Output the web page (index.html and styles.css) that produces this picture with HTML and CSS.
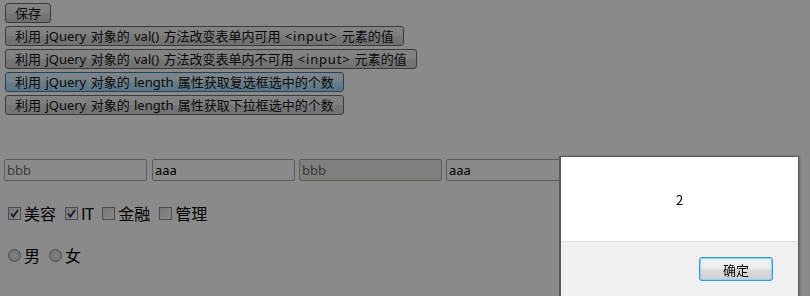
FILE: index.html
```html
<!DOCTYPE html>
<html lang="zh-CN">
<head>
<meta charset="utf-8">
<title>jQuery 表单</title>
<link rel="stylesheet" href="styles.css">
</head>
<body>
<div class="page">
  <div class="btns">
    <button class="btn">保存</button>
    <button class="btn">利用 jQuery 对象的 val() 方法改变表单内可用 <span class="tag">&lt;input&gt;</span> 元素的值</button>
    <button class="btn">利用 jQuery 对象的 val() 方法改变表单内不可用 <span class="tag">&lt;input&gt;</span> 元素的值</button>
    <button class="btn btn-hover">利用 jQuery 对象的 length 属性获取复选框选中的个数</button>
    <button class="btn">利用 jQuery 对象的 length 属性获取下拉框选中的个数</button>
  </div>
  <div class="fields">
    <input class="field field-muted" type="text" value="bbb">
    <input class="field" type="text" value="aaa">
    <input class="field field-disabled" type="text" value="bbb" disabled>
    <input class="field" type="text" value="aaa">
  </div>
  <div class="checks">
    <label class="opt"><span class="box checked"><svg viewBox="0 0 13 13" width="13" height="13"><path d="M3 6.5 L5.3 9.5 L10 3" fill="none" stroke="#1e2a66" stroke-width="1.8"/></svg></span>美容</label>
    <label class="opt"><span class="box checked"><svg viewBox="0 0 13 13" width="13" height="13"><path d="M3 6.5 L5.3 9.5 L10 3" fill="none" stroke="#1e2a66" stroke-width="1.8"/></svg></span>IT</label>
    <label class="opt"><span class="box"></span>金融</label>
    <label class="opt"><span class="box"></span>管理</label>
  </div>
  <div class="radios">
    <label class="opt"><span class="radio"></span>男</label>
    <label class="opt"><span class="radio"></span>女</label>
  </div>
</div>
<div class="overlay"></div>
<div class="dialog">
  <div class="dialog-body">2</div>
  <div class="dialog-foot"><button class="ok">确定</button></div>
</div>
</body>
</html>
```
FILE: styles.css
```css
html, body {
  margin: 0;
  padding: 0;
  background: #ffffff;
  width: 810px;
  height: 296px;
  overflow: hidden;
  font-family: "Noto Sans CJK SC", "Noto Sans", sans-serif;
}

.page {
  padding: 3px 0 0 5px;
}

.btns {
  display: flex;
  flex-direction: column;
  align-items: flex-start;
  gap: 3px;
}

.btn {
  height: 20px;
  padding: 0 9px;
  margin: 0;
  border: 1px solid #707070;
  border-radius: 3px;
  background: linear-gradient(#f2f2f2 0%, #ebebeb 48%, #dddddd 52%, #cfcfcf 100%);
  font-family: "Noto Sans", "Noto Sans CJK SC", sans-serif;
  font-size: 13px;
  line-height: 18px;
  word-spacing: 1px;
  color: #111;
  white-space: nowrap;
}

.tag {
  letter-spacing: 0.8px;
}

.btn-hover {
  border-color: #3c7fb1;
  background: linear-gradient(#eaf6fd 0%, #d9f0fc 48%, #bee6fd 52%, #a7d9f5 100%);
}

.fields {
  display: flex;
  gap: 5px;
  margin: 44px 0 0 -1px;
  white-space: nowrap;
}

.field {
  flex: none;
  box-sizing: border-box;
  width: 143px;
  height: 22px;
  margin: 0;
  padding: 0 2px;
  border: 1px solid #abadb3;
  border-radius: 2px;
  background: #ffffff;
  font-family: "Noto Sans", sans-serif;
  font-size: 13px;
  color: #000;
}

.field + .field + .field {
  margin-left: -1px;
}

.field-muted {
  color: #6d6d6d;
}

.field-disabled {
  background: #ebebe6;
  color: #6d6d6d;
}

.checks {
  display: flex;
  align-items: center;
  margin: 21px 0 0 3px;
  height: 22px;
  font-size: 16px;
  color: #000;
}

.radios {
  display: flex;
  align-items: center;
  margin: 20px 0 0 3px;
  height: 22px;
  font-size: 16px;
  color: #000;
}

.opt {
  display: flex;
  align-items: center;
  margin-right: 10px;
  line-height: 18px;
}

.opt + .opt {
  margin-left: -1px;
}

.checks .opt:nth-child(2) {
  letter-spacing: -1px;
}

.box {
  box-sizing: border-box;
  width: 13px;
  height: 13px;
  margin-right: 3px;
  border: 1px solid #8f8f8f;
  background: linear-gradient(135deg, #dcdcdc, #ffffff);
  display: block;
}

.box svg {
  display: block;
  margin: -1px;
}

.radio {
  box-sizing: border-box;
  width: 13px;
  height: 13px;
  margin-right: 3px;
  border: 1px solid #8f8f8f;
  border-radius: 50%;
  background: radial-gradient(circle at 50% 45%, #f4f4f4 0, #d8d8d8 60%, #c4c4c4 100%);
  display: block;
}

.overlay {
  position: fixed;
  inset: 0;
  background: rgba(0, 0, 0, 0.46);
}

.dialog {
  position: absolute;
  left: 559px;
  top: 156px;
  width: 237px;
  height: 160px;
  border: 1px solid #5a5a5a;
  border-left-width: 2px;
  background: #f0f0f0;
  box-shadow: 1px 0 2px rgba(0, 0, 0, 0.25);
  font-family: "Noto Sans CJK SC", sans-serif;
}

.dialog-body {
  height: 84px;
  background: #ffffff;
  border-bottom: 1px solid #dfdfdf;
  display: flex;
  align-items: center;
  justify-content: center;
  font-size: 13px;
  color: #000;
}

.dialog-foot {
  display: flex;
  justify-content: flex-end;
  padding: 15px 25px 0 0;
}

.ok {
  width: 74px;
  height: 24px;
  margin: 0;
  padding: 0;
  border: 1px solid #3399dd;
  border-radius: 3px;
  box-shadow: inset 0 0 0 1px #8fd3f5;
  background: linear-gradient(#f2f2f2 0%, #ebebeb 48%, #dddddd 52%, #cfcfcf 100%);
  font-family: "Noto Sans CJK SC", sans-serif;
  font-size: 13px;
  color: #000;
}
```
